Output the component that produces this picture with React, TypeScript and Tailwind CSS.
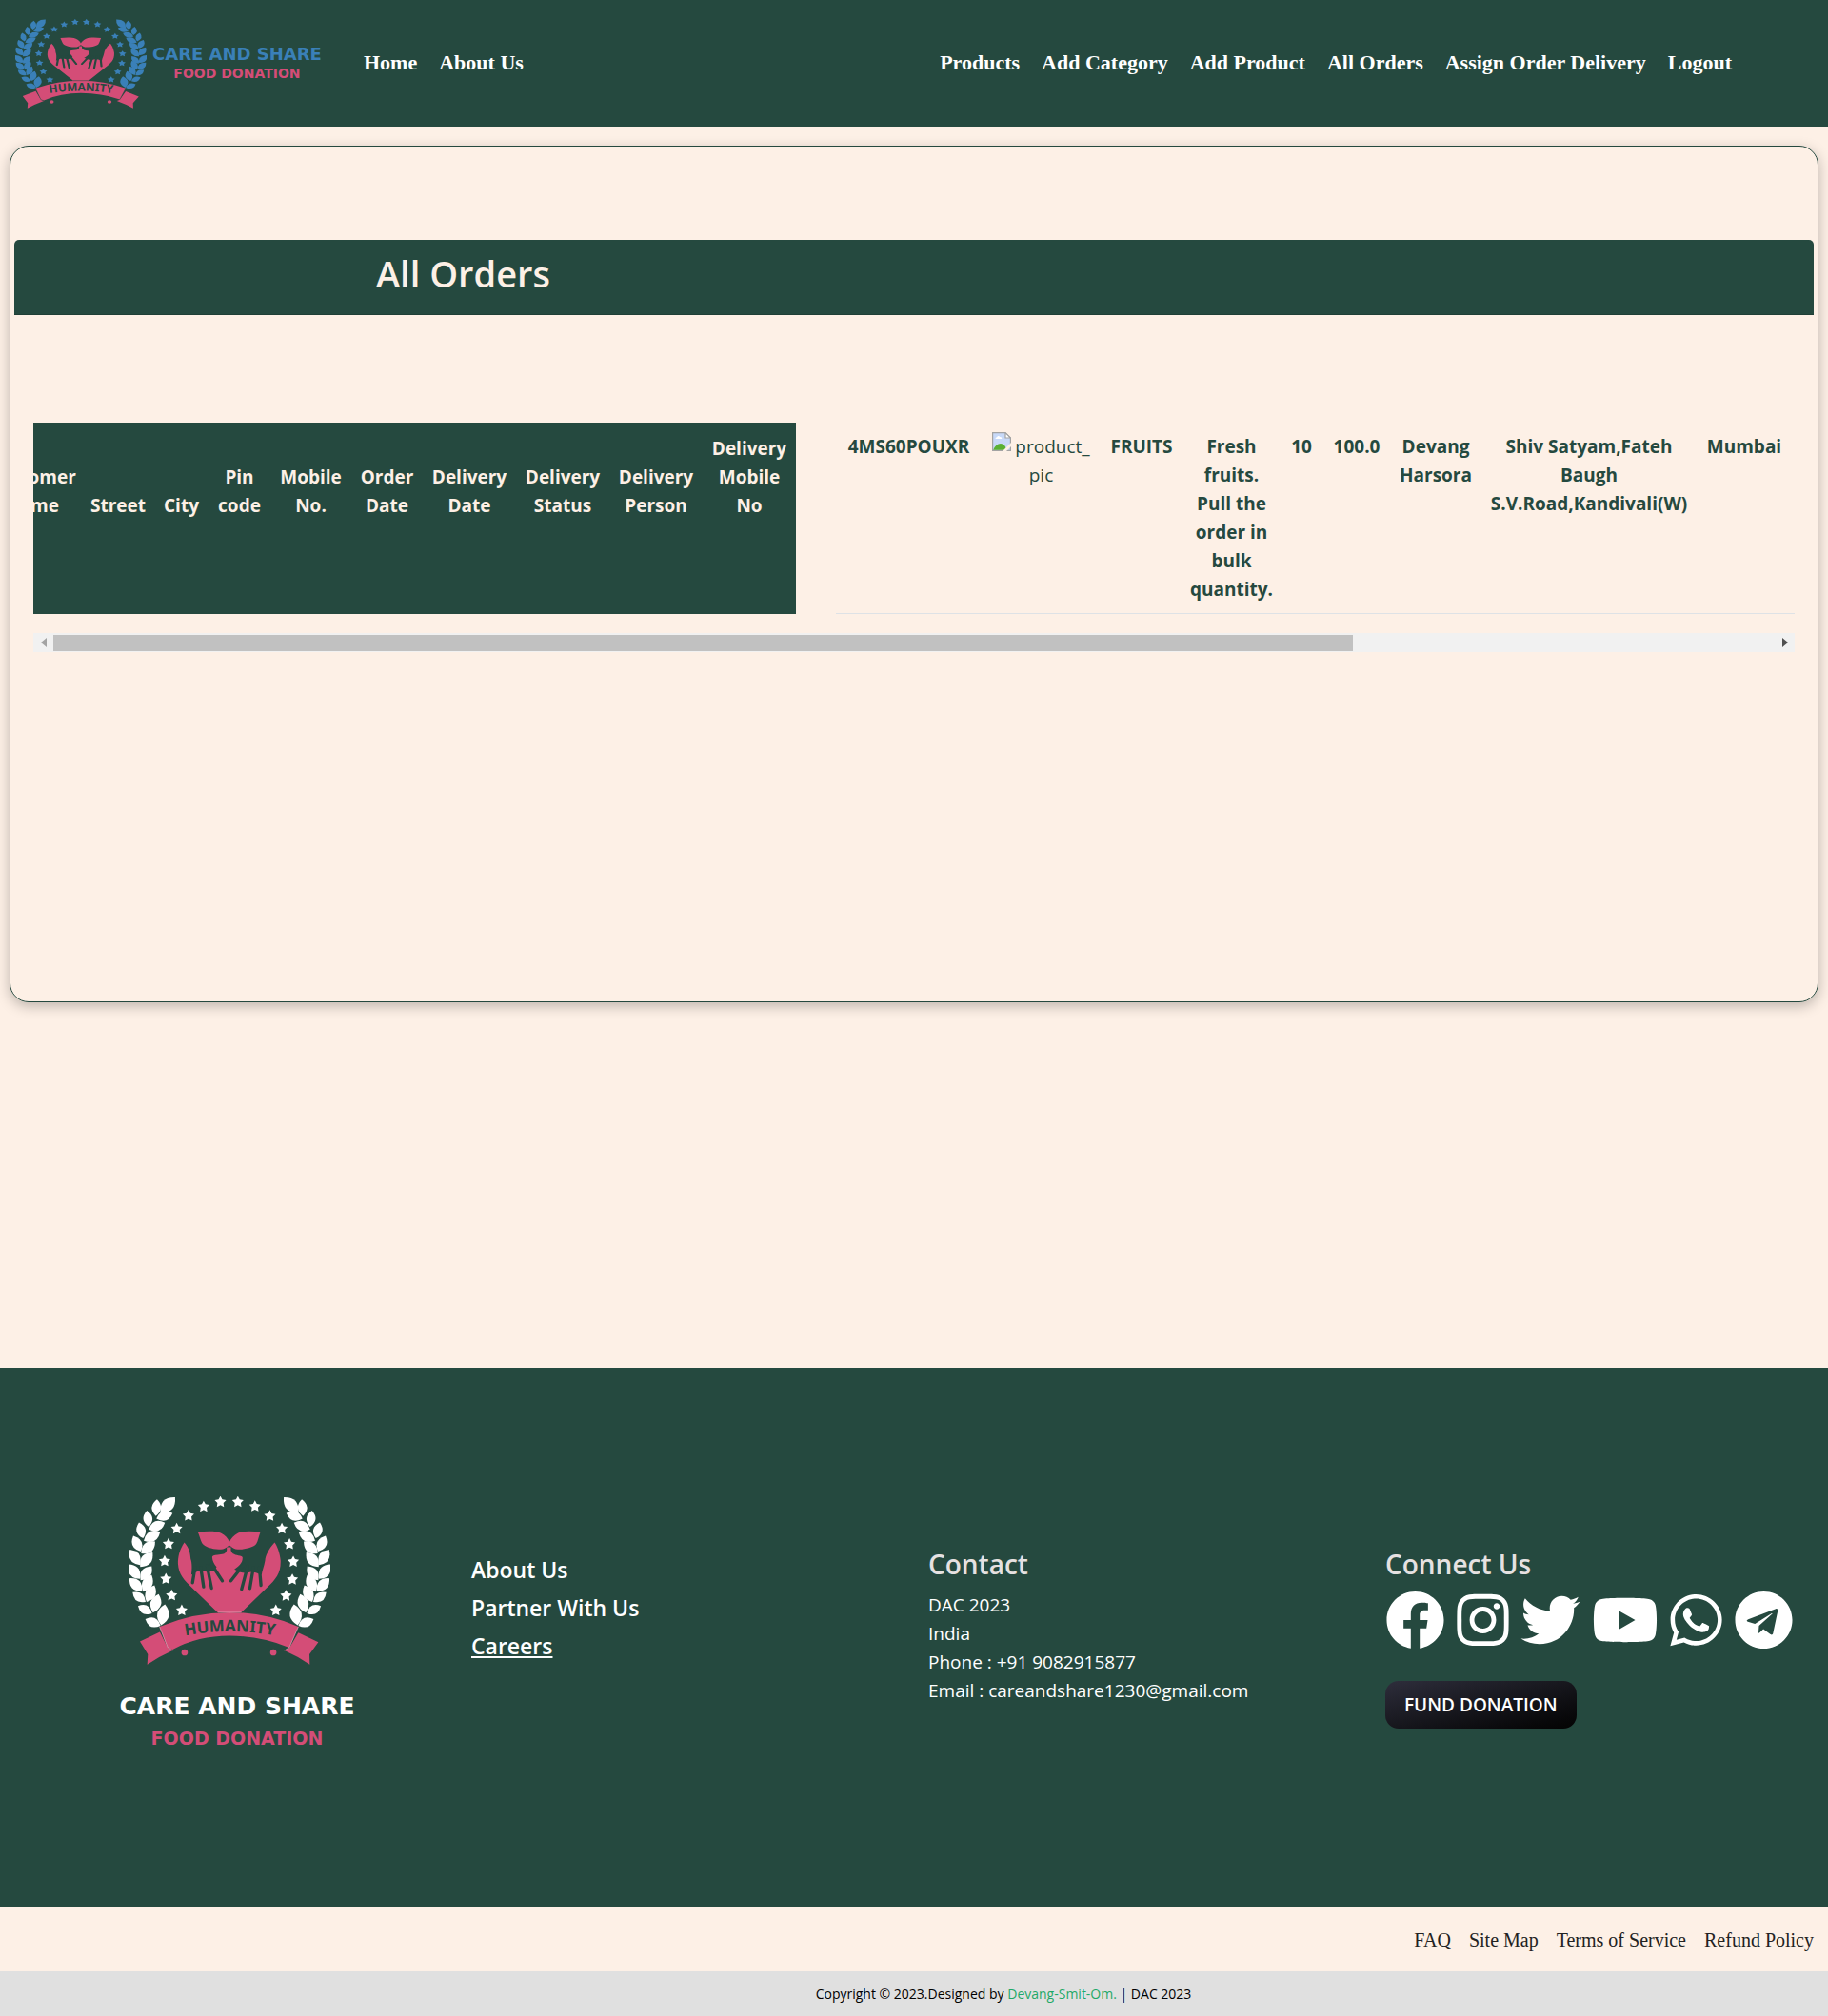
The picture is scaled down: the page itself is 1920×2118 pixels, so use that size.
import React from "react";
import {
  FaFacebook,
  FaInstagram,
  FaTelegram,
  FaTwitter,
  FaWhatsapp,
  FaYoutube,
} from "react-icons/fa";

const GREEN = "#25493f";
const PINK = "#d44d77";

// Emblem artwork is drawn in a 637 x 530 space whose origin is (104, 98).
const ART = { x: 104, y: 98, w: 637, h: 530 };

const STARS: [number, number][] = [
  [272, 457], [240, 410], [222, 358], [218, 302], [230, 248], [256, 200],
  [293, 159], [341, 131], [394, 116], [449, 116], [503, 130], [550, 160],
  [588, 200], [612, 249], [624, 304], [621, 360], [601, 411], [569, 457],
];

// Each leaf: base x, base y, tip x, tip y.
const LEAVES: [number, number, number, number][] = [
  [205, 150, 251, 101],
  [190, 160, 194, 108], [192, 168, 243, 151],
  [168, 194, 162, 143], [168, 202, 219, 181],
  [150, 230, 137, 180], [152, 238, 204, 210],
  [143, 272, 119, 222], [144, 278, 188, 240],
  [140, 314, 108, 266], [141, 320, 180, 275],
  [140, 358, 104, 312], [142, 362, 177, 318],
  [147, 396, 107, 356], [150, 398, 177, 346],
  [158, 430, 117, 400], [161, 430, 186, 378],
  [178, 466, 134, 443], [181, 464, 199, 406],
  [205, 505, 157, 484], [207, 504, 219, 438],
];

const FINGERS: [number, number, number, number][] = [
  [366, 312, 400, 364], [352, 318, 366, 387], [332, 322, 341, 383], [314, 322, 306, 370],
  [468, 312, 427, 364], [480, 318, 461, 390], [498, 322, 487, 388], [517, 322, 522, 378],
];

function leafPath([bx, by, tx, ty]: [number, number, number, number]) {
  const dx = tx - bx;
  const dy = ty - by;
  const nx = -dy * 0.56;
  const ny = dx * 0.56;
  const mx = bx + dx * 0.5;
  const my = by + dy * 0.5;
  return `M${bx} ${by}Q${mx + nx} ${my + ny} ${tx} ${ty}Q${mx - nx} ${my - ny} ${bx} ${by}Z`;
}

function starPath(cx: number, cy: number, r: number) {
  const pts: string[] = [];
  for (let i = 0; i < 10; i++) {
    const rad = i % 2 === 0 ? r : r * 0.52;
    const a = -Math.PI / 2 + (i * Math.PI) / 5;
    pts.push(`${(cx + rad * Math.cos(a)).toFixed(1)} ${(cy + rad * Math.sin(a)).toFixed(1)}`);
  }
  return `M${pts.join("L")}Z`;
}

function Emblem({
  id,
  width,
  height,
  wreath,
  fold,
  fontSize,
}: {
  id: string;
  width: number;
  height: number;
  wreath: string;
  fold: string;
  fontSize: number;
}) {
  const sx = width / ART.w;
  const sy = height / ART.h;
  const px = (x: number) => (x - ART.x) * sx;
  const py = (y: number) => (y - ART.y) * sy;
  return (
    <svg width={width} height={height} viewBox={`0 0 ${width} ${height}`} className="shrink-0" aria-hidden="true">
      <g transform={`scale(${sx} ${sy}) translate(${-ART.x} ${-ART.y})`}>
        <g fill={wreath}>
          {STARS.map(([x, y]) => (
            <path key={`${x}-${y}`} d={starPath(x, y, 19)} />
          ))}
          <g>
            {LEAVES.map((l) => (
              <path key={l.join()} d={leafPath(l)} />
            ))}
          </g>
          <g transform="translate(845 0) scale(-1 1)">
            {LEAVES.map((l) => (
              <path key={l.join()} d={leafPath(l)} />
            ))}
          </g>
        </g>
        <g fill={PINK}>
          <path d="M323 211C350 207 380 207 395 213C410 220 418 230 422 242C428 230 436 220 450 213C465 207 495 207 520 211C515 224 513 238 507 248C500 258 470 268 442 264C434 262 428 256 422 252C416 256 410 262 402 264C375 268 345 258 338 248C332 240 328 222 323 211Z" />
          <path d="M280 243C264 268 260 288 260 310C262 345 280 362 305 386L385 463L460 463L540 386C570 358 585 340 584 300C582 275 572 252 565 243C545 265 536 285 535 300C532 318 526 330 524 345L506 338L490 336L474 340L454 336L438 328C452 318 464 308 464 292Q465 286 456 285C442 283 430 280 427 268L427 258L414 258L414 268C411 280 400 281 385 282Q367 283 368 290C369 302 374 312 382 320L374 332L356 336L340 334L322 334L302 345C305 325 304 305 300 295C299 275 294 258 280 243Z" />
        </g>
        <g stroke={GREEN} strokeWidth="10" strokeLinecap="round">
          {FINGERS.map(([x1, y1, x2, y2]) => (
            <line key={`${x2}`} x1={x1} y1={y1} x2={x2} y2={y2} />
          ))}
        </g>
        <g fill={PINK}>
          <path d="M202 508Q310 463 422 463Q535 463 640 508L611 574Q520 537 422 537Q325 537 243 580L228 576Z" />
          <path d="M140 555L203 525L229 577L243 583Q200 602 163 627L165 595Z" />
          <path d="M703 557L640 527L612 574L596 583Q640 602 676 627L675 595Z" />
          <circle cx="281" cy="589" r="10" />
          <circle cx="561" cy="589" r="10" />
        </g>
        <path
          d="M202 508L228 574L243 583M640 508L611 574L596 583M386 463H460"
          fill="none"
          stroke={fold}
          strokeWidth="2"
        />
      </g>
      <path
        id={id}
        d={`M${px(230)} ${py(547)}Q${px(422)} ${py(500)} ${px(618)} ${py(547)}`}
        fill="none"
      />
      <text fill={GREEN} fontSize={fontSize} fontWeight="700" fontFamily="'Noto Sans', sans-serif" textAnchor="middle">
        <textPath href={`#${id}`} startOffset="50%">
          HUMANITY
        </textPath>
      </text>
    </svg>
  );
}

function BrokenImageIcon() {
  return (
    <svg viewBox="0 0 20 20" className="mr-1 inline-block size-5 align-top" aria-hidden="true">
      <path d="M.6 .6H14L19.4 6V19.4H.6Z" fill="#c8d9f8" stroke="#a3a3a3" strokeWidth="1.2" />
      <path d="M1.2 18.8Q4 12 9 12T15 18.8Z" fill="#5ab033" />
      <path d="M3.5 7Q3.5 5.4 5 5.2Q6.5 3 8.3 5Q10.5 5 10.3 7Z" fill="#fff" />
      <path d="M14 .6L19.4 6H14Z" fill="#fff" stroke="#a3a3a3" strokeWidth="1.2" />
      <path d="M11 20L20 11V15L15 20Z" fill="#fdf0e6" />
    </svg>
  );
}

const HEAD: { lines: string[]; w: string }[] = [
  { lines: ["Customer", "Name"], w: "w-[105px]" },
  { lines: ["Street"], w: "w-[76px]" },
  { lines: ["City"], w: "w-[57px]" },
  { lines: ["Pin", "code"], w: "w-[65px]" },
  { lines: ["Mobile", "No."], w: "w-[85px]" },
  { lines: ["Order", "Date"], w: "w-[75px]" },
  { lines: ["Delivery", "Date"], w: "w-[98px]" },
  { lines: ["Delivery", "Status"], w: "w-[98px]" },
  { lines: ["Delivery", "Person"], w: "w-[98px]" },
  { lines: ["Delivery", "Mobile", "No"], w: "w-[98px]" },
];

const ROW: { lines: string[]; w: string }[] = [
  { lines: ["4MS60POUXR"], w: "w-[153px]" },
  { lines: ["product_", "pic"], w: "w-[125px]" },
  { lines: ["FRUITS"], w: "w-[86px]" },
  { lines: ["Fresh", "fruits.", "Pull the", "order in", "bulk", "quantity."], w: "w-[103px]" },
  { lines: ["10"], w: "w-[44px]" },
  { lines: ["100.0"], w: "w-[72px]" },
  { lines: ["Devang", "Harsora"], w: "w-[94px]" },
  { lines: ["Shiv Satyam,Fateh", "Baugh", "S.V.Road,Kandivali(W)"], w: "w-[228px]" },
  { lines: ["Mumbai"], w: "w-[98px]" },
];

function Lines({ lines }: { lines: string[] }) {
  return (
    <>
      {lines.map((l) => (
        <span key={l} className="block whitespace-nowrap">
          {l}
        </span>
      ))}
    </>
  );
}

function OrdersTable() {
  return (
    <table className="flex w-full overflow-hidden text-center text-[19px] leading-[30px]">
      <thead className="mr-[42px] flex w-[801px] shrink-0 justify-end overflow-hidden bg-[#25493f] pt-0.5 text-[#fdf0e6]">
        <tr className="flex shrink-0 items-start">
          {HEAD.map((h, i) => (
            <th key={i} scope="col" className={`flex h-[110px] shrink-0 flex-col items-center justify-end pb-2.5 font-bold ${h.w}`}>
              <Lines lines={h.lines} />
            </th>
          ))}
        </tr>
      </thead>
      <tbody className="flex min-w-0 flex-1 overflow-hidden border-b border-[#dee2e6] text-[#25493f]">
        <tr className="flex">
          {ROW.map((c, i) => (
            <td key={i} className={`flex shrink-0 flex-col items-center py-2.5 ${c.w} ${i === 1 ? "font-normal" : "font-bold"}`}>
              {i === 1 ? (
                <span role="img" aria-label="product_pic" className="block">
                  <span className="block whitespace-nowrap">
                    <BrokenImageIcon />
                    product_
                  </span>
                  <span className="block">pic</span>
                </span>
              ) : (
                <Lines lines={c.lines} />
              )}
            </td>
          ))}
        </tr>
      </tbody>
    </table>
  );
}

function ScrollBar() {
  return (
    <div className="mt-5 flex h-5 items-center bg-[#f1f1f1]">
      <button aria-label="Scroll left" className="flex w-[21px] items-center justify-center">
        <svg width="6" height="10" viewBox="0 0 6 10"><path d="M6 0V10L0 5Z" fill="#a3a3a3" /></svg>
      </button>
      <div className="h-[17px] flex-1">
        <div className="h-full w-[75.5%] bg-[#c1c1c1]" />
      </div>
      <button aria-label="Scroll right" className="flex w-[21px] items-center justify-center">
        <svg width="6" height="10" viewBox="0 0 6 10"><path d="M0 0V10L6 5Z" fill="#505050" /></svg>
      </button>
    </div>
  );
}

export default function App() {
  return (
    <div className="bg-[#fdf0e6] font-['Open_Sans',sans-serif]">
      <header className="flex h-[133px] items-center bg-[#25493f] pl-4 font-['Liberation_Serif',serif] text-[22px] font-bold text-white">
        <a href="#" aria-label="Care and Share" className="flex w-[366px] shrink-0 items-center gap-1.5">
          <Emblem id="humanity-nav" width={138} height={94} wreath="#3a80b8" fold={GREEN} fontSize={12} />
          <span className="flex flex-col items-center whitespace-nowrap font-['DejaVu_Sans',sans-serif]">
            <span className="text-[18px] leading-5 text-[#3a80b8]">CARE AND SHARE</span>
            <span className="text-[14px] leading-5 text-[#d44d77]">FOOD DONATION</span>
          </span>
        </a>
        <nav className="flex flex-1 items-center justify-between pr-[101px] pb-0.5">
          <div className="flex gap-[23px]">
            <a href="#">Home</a>
            <a href="#">About Us</a>
          </div>
          <div className="flex gap-[23px]">
            <a href="#">Products</a>
            <a href="#">Add Category</a>
            <a href="#">Add Product</a>
            <a href="#">All Orders</a>
            <a href="#">Assign Order Delivery</a>
            <a href="#">Logout</a>
          </div>
        </nav>
      </header>

      <main className="px-2.5 pt-5 pb-96">
        <section className="min-h-[900px] rounded-[20px] border border-[#25493f] px-1 pt-[98px] shadow-[0_4px_14px_rgba(0,0,0,0.25)]">
          <div className="h-[79px] rounded-t-[5px] border-b border-[#1f3f36] bg-[#25493f] pt-2.5 pl-95">
            <h1 className="text-[38px] leading-[50px] font-semibold text-[#fdf0e6]">All Orders</h1>
          </div>
          <div className="px-5 pt-[113px]">
            <OrdersTable />
            <ScrollBar />
          </div>
        </section>
      </main>

      <footer>
        <div className="grid grid-cols-4 bg-[#25493f] pt-[135px] pb-[161px] text-white">
          <div className="pl-[125px]">
            <div className="flex w-[248px] flex-col items-center font-['DejaVu_Sans',sans-serif] font-bold whitespace-nowrap">
              <div className="mr-4">
                <Emblem id="humanity-footer" width={212} height={177} wreath="#ffffff" fold="#e9a9bd" fontSize={17} />
              </div>
              <div className="mt-7 text-[25px] leading-8">CARE AND SHARE</div>
              <div className="text-[19px] leading-[34px] text-[#d44d77]">FOOD DONATION</div>
            </div>
          </div>
          <div className="flex flex-col items-start px-[15px] pt-[57px] text-[23px] leading-10 font-semibold">
            <a href="#">About Us</a>
            <a href="#">Partner With Us</a>
            <a href="#" className="underline decoration-2 underline-offset-2">Careers</a>
          </div>
          <div className="px-[15px] pt-[53px]">
            <h2 className="text-[28px] leading-9 font-semibold text-[#e6e1e1]">Contact</h2>
            <div className="mt-2.5 text-[19px] leading-[30px]">
              <p>DAC 2023</p>
              <p>India</p>
              <p>Phone : +91 9082915877</p>
              <p>Email : careandshare1230@gmail.com</p>
            </div>
          </div>
          <div className="px-[15px] pt-[53px]">
            <h2 className="text-[28px] leading-9 font-semibold text-[#e6e1e1]">Connect Us</h2>
            <div className="mt-2.5 flex gap-3">
              <a href="#" aria-label="Facebook"><FaFacebook className="h-[62px] w-[63px]" /></a>
              <a href="#" aria-label="Instagram"><FaInstagram className="h-[62px] w-[55px]" /></a>
              <a href="#" aria-label="Twitter"><FaTwitter className="h-[62px] w-[63px]" /></a>
              <a href="#" aria-label="YouTube"><FaYoutube className="h-[62px] w-[70px]" /></a>
              <a href="#" aria-label="WhatsApp"><FaWhatsapp className="h-[62px] w-[55px]" /></a>
              <a href="#" aria-label="Telegram"><FaTelegram className="h-[62px] w-[63px]" /></a>
            </div>
            <button className="mt-[33px] h-[50px] rounded-[14px] bg-linear-to-br from-[#2e2e3c] to-[#040404] px-5 text-[19px] font-semibold text-white">
              FUND DONATION
            </button>
          </div>
        </div>
        <nav className="flex h-[67px] items-center justify-end gap-[19px] pr-[15px] font-['Liberation_Serif',serif] text-[20px] text-[#222]">
          <a href="#">FAQ</a>
          <a href="#">Site Map</a>
          <a href="#">Terms of Service</a>
          <a href="#">Refund Policy</a>
        </nav>
        <div className="flex h-[47px] items-center justify-center bg-[#e0e0e0] pl-47 text-[14px] text-black">
          <p>
            Copyright © 2023.Designed by <a href="#" className="text-[#1fa968]">Devang-Smit-Om.</a> | DAC 2023
          </p>
        </div>
      </footer>
    </div>
  );
}
